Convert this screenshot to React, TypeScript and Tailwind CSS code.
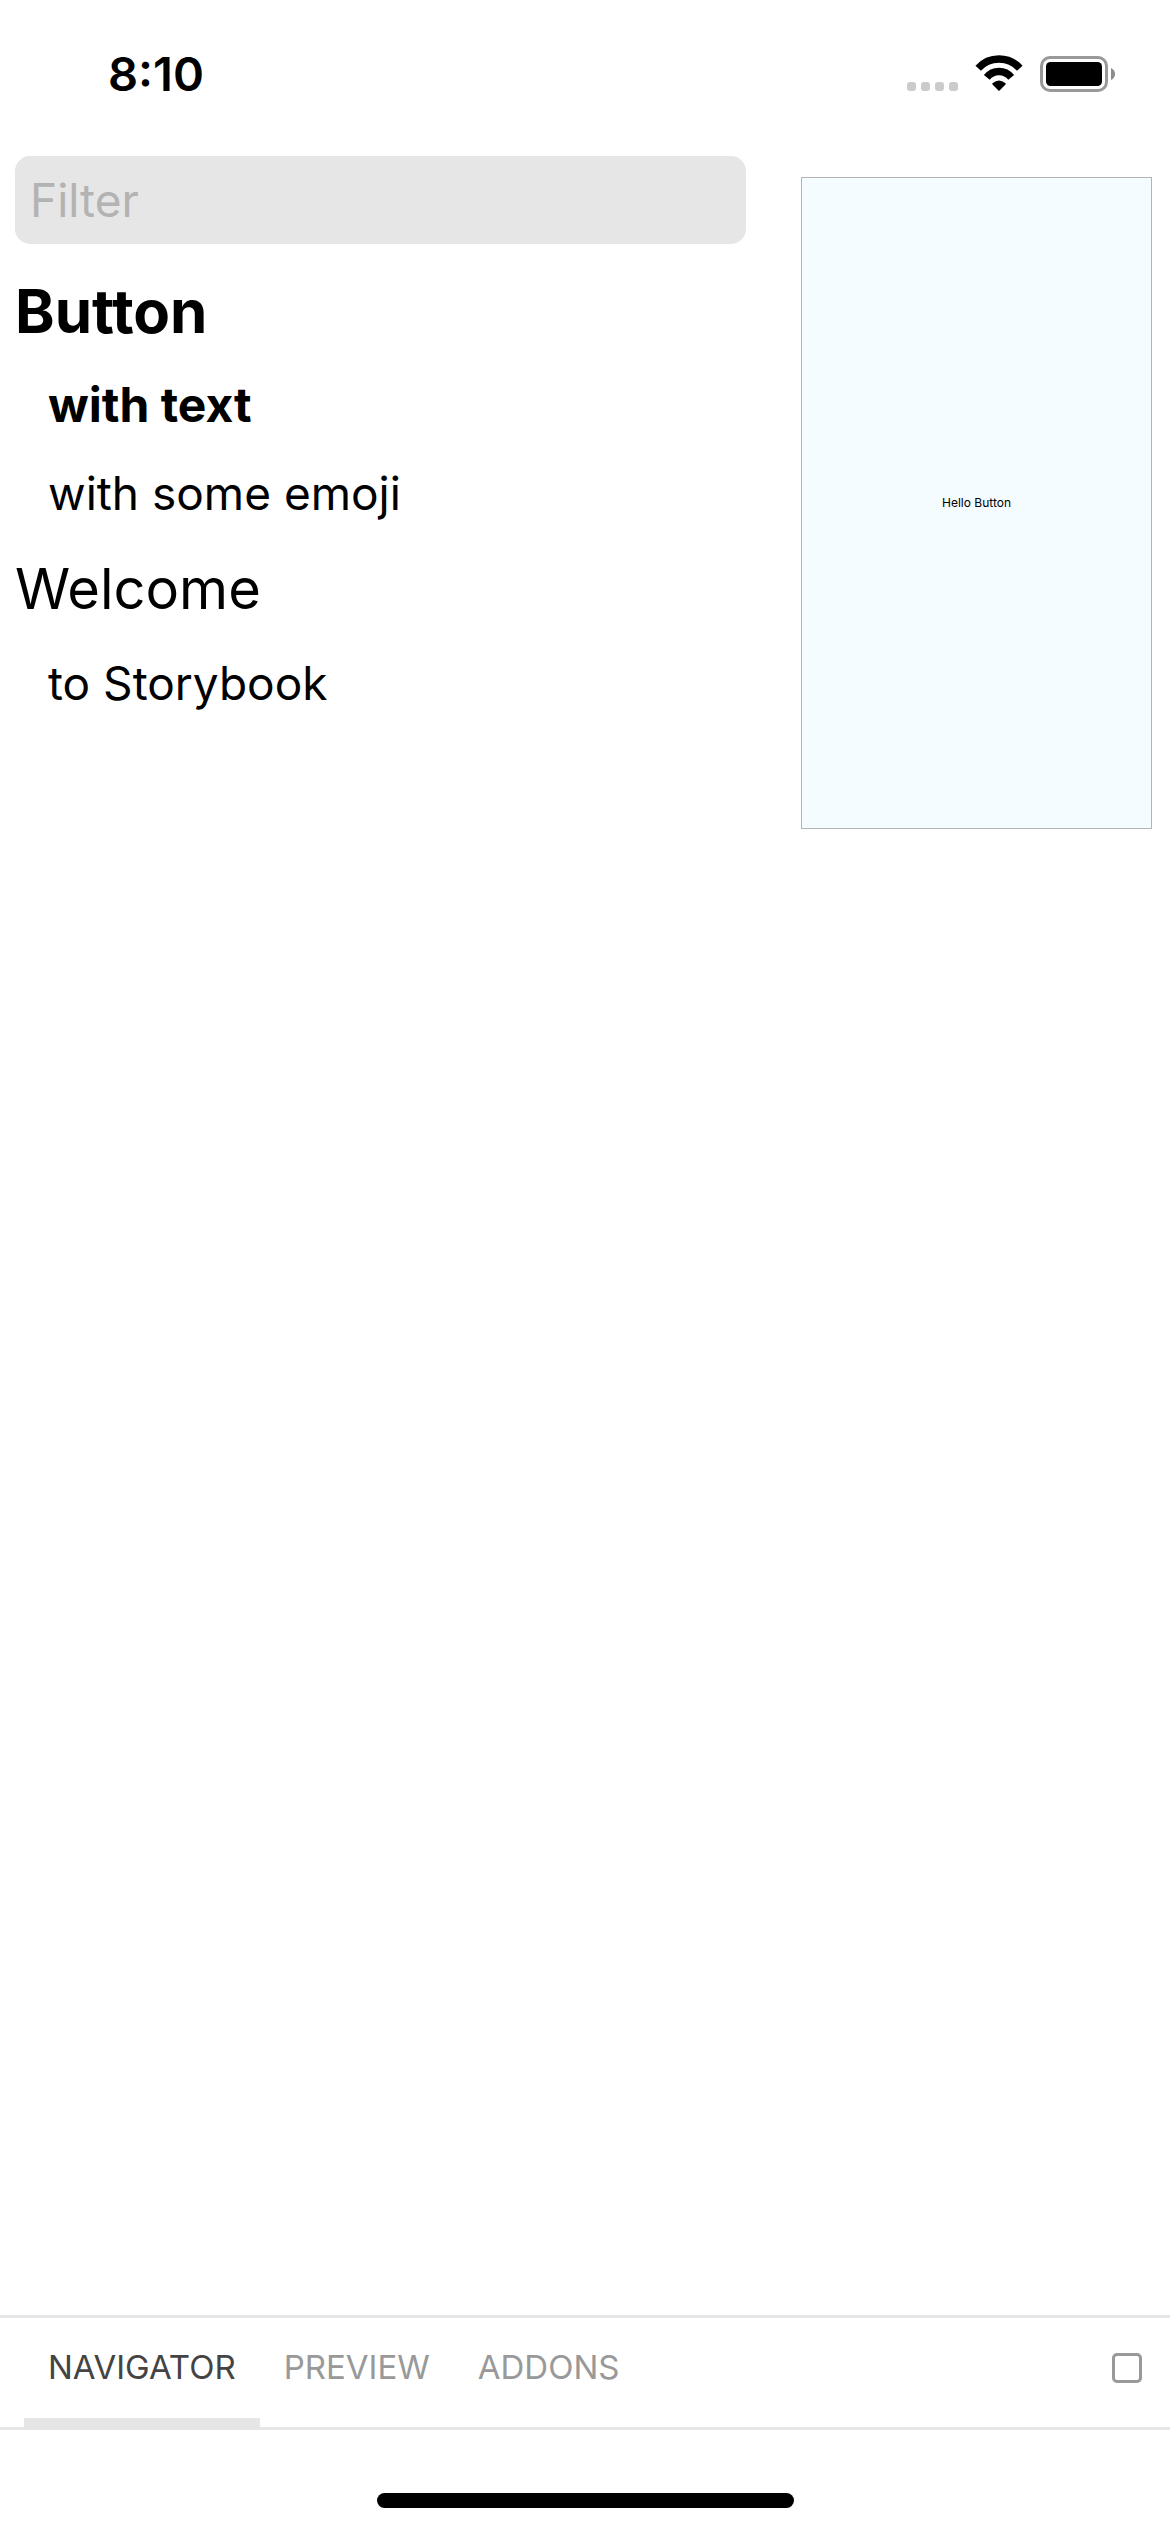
import { useState } from "react";

type StoryGroup = { kind: string; stories: string[] };

const groups: StoryGroup[] = [
  { kind: "Button", stories: ["with text", "with some emoji"] },
  { kind: "Welcome", stories: ["to Storybook"] },
];

const tabs = ["NAVIGATOR", "PREVIEW", "ADDONS"];

function StatusBar() {
  return (
    <header className="flex h-[141px] items-start justify-between pt-[54px] pr-[55px] pl-[108px]">
      <time className="text-[47px] leading-10 font-semibold">8:10</time>
      <svg width="208" height="38" viewBox="0 0 208 38" aria-label="Signal, Wi-Fi, battery" role="img">
        <g fill="#cbcbcb">
          <rect x="0" y="28" width="9" height="9" rx="3" />
          <rect x="14" y="28" width="9" height="9" rx="3" />
          <rect x="28" y="28" width="9" height="9" rx="3" />
          <rect x="42" y="28" width="9" height="9" rx="3" />
        </g>
        <g fill="none" stroke="#000" strokeWidth="7.4">
          <path d="M71.200 14.200 A28.000 28.000 0 0 1 112.800 14.200" />
          <path d="M79.800 23.400 A15.500 15.500 0 0 1 104.200 23.400" />
        </g>
        <path
          d="M92 37 L85.500 30.600 Q84.800 29.700 85.800 29 Q92 24 98.200 29 Q99.200 29.700 98.500 30.600 Z"
          fill="#000"
        />
        <rect x="134.500" y="3.500" width="65" height="33" rx="8.500" fill="none" stroke="#999" strokeWidth="3" />
        <rect x="139" y="8" width="56" height="24" rx="4.500" fill="#000" />
        <path d="M204 14 Q208 16 208 20 Q208 24 204 26 Z" fill="#8c8c8c" />
      </svg>
    </header>
  );
}

export default function App() {
  const [filter, setFilter] = useState("");
  const [tab, setTab] = useState("NAVIGATOR");
  const [selected, setSelected] = useState({ kind: "Button", story: "with text" });

  return (
    <div className="flex min-h-screen flex-col bg-white font-['Inter',sans-serif] text-black">
      <StatusBar />
      <main className="flex flex-1 items-start">
        <nav className="min-w-0 flex-1 pt-[15px] pl-[15px]" aria-label="Stories">
          <input
            type="text"
            aria-label="Filter"
            placeholder="Filter"
            value={filter}
            onChange={(e) => setFilter(e.target.value)}
            className="block h-[88px] w-full rounded-[15px] bg-[#e6e6e6] px-[15px] text-[46px] outline-none placeholder:text-[#b3b3b3]"
          />
          <ul className="pt-[15px]">
            {groups.map((group) => (
              <li key={group.kind}>
                <button
                  type="button"
                  onClick={() => setSelected({ kind: group.kind, story: group.stories[0] })}
                  className={`block h-[102px] text-left leading-[104px] ${
                    selected.kind === group.kind ? "text-[60px] font-bold" : "text-[56px] font-normal"
                  }`}
                >
                  {group.kind}
                </button>
                <ul className="pl-[33px]">
                  {group.stories.map((story) => (
                    <li key={story}>
                      <button
                        type="button"
                        onClick={() => setSelected({ kind: group.kind, story })}
                        className={`block h-[88px] text-left leading-[78px] ${
                          selected.kind === group.kind && selected.story === story
                            ? "text-[48px] font-bold"
                            : "text-[46px] font-normal"
                        }`}
                      >
                        {story}
                      </button>
                    </li>
                  ))}
                </ul>
              </li>
            ))}
          </ul>
        </nav>
        <section
          aria-label="Preview"
          className="mt-9 mr-[18px] ml-[55px] flex h-[652px] w-[30%] shrink-0 items-center justify-center border border-[#b3b3b3] bg-[#f5fcff]"
        >
          <button type="button" className="text-[12px] leading-4">
            Hello Button
          </button>
        </section>
      </main>
      <footer>
        <div className="flex h-[115px] items-stretch justify-between border-y-[3px] border-[#e6e6e6] pr-7 pl-6">
          <div role="tablist" className="flex">
            {tabs.map((name) => (
              <button
                key={name}
                type="button"
                role="tab"
                aria-selected={tab === name}
                onClick={() => setTab(name)}
                className={`border-b-[9px] px-6 pb-[3px] text-[33px] leading-10 ${
                  tab === name ? "border-[#e6e6e6] text-[#444]" : "border-transparent text-[#999]"
                }`}
              >
                {name}
              </button>
            ))}
          </div>
          <button
            type="button"
            aria-label="Toggle full screen"
            className="mt-[35px] size-[30px] rounded-[5px] border-[3px] border-[#999]"
          />
        </div>
        <div className="flex h-[102px] justify-center pt-[63px]">
          <div className="h-[15px] w-[417px] rounded-full bg-black" />
        </div>
      </footer>
    </div>
  );
}
